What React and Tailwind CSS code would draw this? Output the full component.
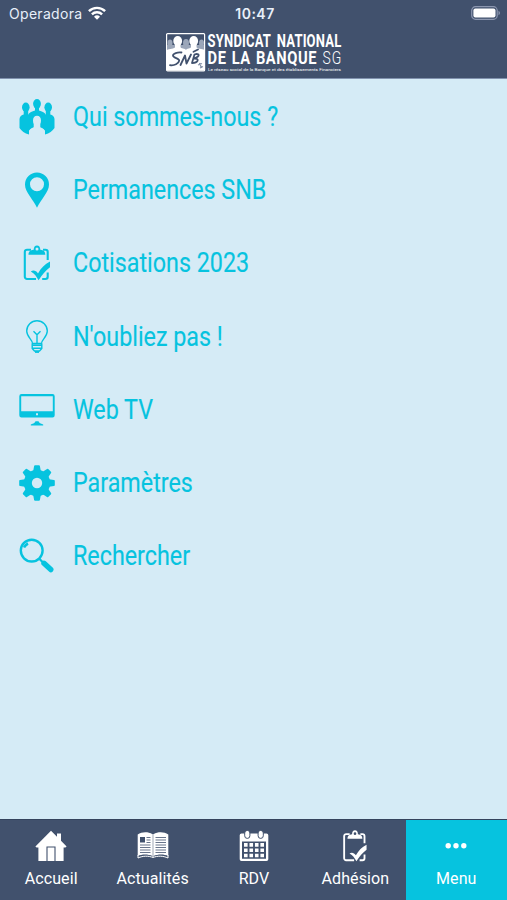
import React from 'react';

const PeopleIcon = () => (
    <svg viewBox="0 0 36 36" className="size-9" fill="currentColor">
        <ellipse cx="18" cy="4.800" rx="3.900" ry="4.800" />
        <path d="M16 7h4v4.500c3 .7 5.500 2 6.500 3.500l1 8H8.500l1-8c1-1.500 3.500-2.800 6.500-3.500z" />
        <ellipse cx="6.800" cy="8.200" rx="3.800" ry="4.700" />
        <ellipse cx="29.200" cy="8.200" rx="3.800" ry="4.700" />
        <path d="M4.700 10h4.500v5.500c2.500.3 4 1.500 5.500 3.200v10c-2 .8-4 1.800-4.700 3.300v3.500C5.700 34.300 2.400 32 .5 29V20c.2-2.500 2-4 4.200-4.500z" />
        <path d="M31.300 10h-4.500v5.500c-2.500.3-4 1.500-5.500 3.200v10c2 .8 4 1.800 4.700 3.300v3.500c4.300-1.200 7.600-3.500 9.500-6.500V20c-.2-2.500-2-4-4.200-4.500z" />
        <path d="M18 16.800c2.500 0 4 1.900 4 4.700 0 2.200-.8 3.700-2 4.600v1.900c2.600.7 4.800 1.800 5.600 3.300l.4 4.700H10l.4-4.700c.8-1.500 3-2.600 5.600-3.300v-1.900c-1.200-.9-2-2.400-2-4.600 0-2.800 1.500-4.700 4-4.700z" className="fill-[#d5ebf6]" />
    </svg>
);

const PinIcon = () => (
    <svg viewBox="0 0 36 36" className="size-9" fill="currentColor">
        <path fillRule="evenodd" d="M18 .5a12 12 0 0 1 12 12c0 4.500-2 7-4.700 11.500-3 4.500-5.300 7.500-7.300 11.700-2-4.200-4.300-7.200-7.300-11.700C8 19.500 6 17 6 12.500a12 12 0 0 1 12-12zm0 4.800a7 7 0 1 0 0 14 7 7 0 0 0 0-14z" />
    </svg>
);

const ClipboardIcon = ({ className }) => (
    <svg viewBox="0 0 36 36" className={className} fill="currentColor">
        <path d="M12 4.700H8a2.200 2.200 0 0 0-2.200 2.200v24.900A2.200 2.200 0 0 0 8 34h9M24 4.700h2.500a2.200 2.200 0 0 1 2.200 2.200V15M28.700 27.500v4.300a2.200 2.200 0 0 1-2.200 2.200h-3.300" fill="none" stroke="currentColor" strokeWidth="2.100" />
        <path fillRule="evenodd" d="M9.500 9.800C9.500 6.500 11 5.200 14.700 4.700 14.700 1.800 16 .4 18 .4s3.300 1.400 3.300 4.300c3.500.5 5 1.800 5 5.100zM18 2.600a1.500 1.500 0 1 0 0 3 1.500 1.500 0 0 0 0-3z" />
        <path d="M11.800 26.500c2.500-1.700 5.200-.9 7.200 1.900 3.200-5.500 6.600-9.200 12-11.900v5.700c-4.800 3.500-7.600 7.300-11.400 13-2-3.500-4-6.800-7.800-8.700z" />
    </svg>
);

const BulbIcon = () => (
    <svg viewBox="0 0 36 36" className="size-9" fill="none" stroke="currentColor" strokeWidth="1.400">
        <path d="M13.500 24.500c0-4-5.800-6.300-5.800-12.400a10.300 10.300 0 0 1 20.600 0c0 6.100-5.800 8.400-5.800 12.400zM13.200 26.300h9.600" strokeLinejoin="round" />
        <path d="M13.200 24.500v5l2.300 2.500h5l2.300-2.500v-5M13.200 29.300h9.600M18 24V15.500M14.500 12.300l3.500 3.500 3.500-3.500" />
        <path d="M16 33h4" strokeWidth="1.800" />
    </svg>
);

const ScreenIcon = () => (
    <svg viewBox="0 0 36 36" className="size-9" fill="currentColor">
        <path fillRule="evenodd" d="M2.500 2h31A2.200 2.200 0 0 1 35.700 4.200v19a2.200 2.200 0 0 1-2.200 2.200h-31A2.200 2.200 0 0 1 .3 23.200v-19A2.200 2.200 0 0 1 2.500 2zM2.200 4.200v15h31.600v-15zM17 21.300v2h2v-2z" />
        <path d="M16.500 29.300h3c.5 1.700 2 2.300 4.700 3.100v1H11.800v-1c2.700-.8 4.200-1.400 4.700-3.100z" />
    </svg>
);

const GearIcon = () => (
    <svg viewBox="-18 -18 36 36" className="size-9" fill="currentColor">
        {[0, 45, 90, 135].map((angle) => (
            <path key={angle} transform={`rotate(${angle})`} d="M-3.800-12L-2.900-17Q-2.700-17.800-1.900-17.800H1.900Q2.700-17.800 2.900-17L3.800-12V12L2.900 17Q2.700 17.800 1.900 17.800H-1.900Q-2.700 17.800-2.900 17L-3.800 12z" />
        ))}
        <circle r="13.200" />
        <circle r="5.200" className="fill-[#d5ebf6]" />
    </svg>
);

const SearchIcon = () => (
    <svg viewBox="0 0 36 36" className="size-9" fill="none" stroke="currentColor">
        <circle cx="12.700" cy="12.600" r="10.900" strokeWidth="2.400" />
        <path d="M5 9.500a9 9 0 0 1 4-4" strokeWidth="2.600" />
        <path d="M19.800 20.300l5 5" strokeWidth="2.200" />
        <path d="M25 25.300l6.800 6.300" strokeWidth="5.400" strokeLinecap="round" />
    </svg>
);

const HomeIcon = () => (
    <svg viewBox="0 0 32 32" className="size-8" fill="currentColor">
        <path d="M16 .7l6 6V3.500h4v7.200l5.600 5.700-1.200 1.200H28.600V31H3.400V17.600H1.600L.4 16.400z" />
        <path d="M12 31V17h8v14" fill="none" stroke="#41516d" strokeWidth="1.100" />
    </svg>
);

const NewsIcon = () => (
    <svg viewBox="0 0 32 32" className="size-8" fill="currentColor">
        <path d="M.7 4.500C5 1.700 11 1.700 15.500 4.200V26C11 24 5 24 .7 26zM16.500 4.200C21 1.700 27 1.700 31.300 4.500V26c-4.300-2-10.300-2-14.800 0z" />
        <path d="M1 25v3c5-2.300 10.500-2.300 15-.5 4.500-1.800 10-1.800 15 .5v-3M16 4v23" fill="none" stroke="currentColor" strokeWidth="1" />
        <path d="M3 7h5v5.500H3z" fill="#41516d" />
        <path d="M9.500 7.500h4M9.500 10h4M9.500 12.500h4M3 15h10.500M3 17.500h10.500M3 20h10.500M3 22.500h10.500M18.500 7.500H29M18.500 10H29M18.500 12.500H29M18.500 15H29M18.500 17.500H29M18.500 20H29M18.500 22.500H29" stroke="#41516d" strokeWidth=".8" />
    </svg>
);

const CalendarIcon = () => (
    <svg viewBox="0 0 32 32" className="size-8" fill="currentColor">
        <path fillRule="evenodd" d="M3.500 3.500h25a1.800 1.800 0 0 1 1.800 1.800v24a1.800 1.800 0 0 1-1.800 1.800h-25a1.800 1.800 0 0 1-1.800-1.800v-24a1.800 1.800 0 0 1 1.800-1.800zM4 11.500v17.300h24V11.500z" />
        <g stroke="#41516d" strokeWidth="1">
            <rect x="6.700" y=".4" width="5.200" height="8" rx="2.600" />
            <rect x="20.100" y=".4" width="5.200" height="8" rx="2.600" />
        </g>
        <path d="M6 14.900h20M6 20.200h20M6 25.500h20" stroke="currentColor" strokeWidth="3.600" strokeDasharray="3.600 1.867" />
    </svg>
);

const DotsIcon = () => (
    <svg viewBox="0 0 32 32" className="size-8" fill="currentColor">
        <circle cx="8.200" cy="15.800" r="2.700" />
        <circle cx="16" cy="15.800" r="2.700" />
        <circle cx="23.800" cy="15.800" r="2.700" />
    </svg>
);

const Logo = () => (
    <svg viewBox="0 0 180 42" className="w-[180px] h-[42px] ml-[4px] overflow-visible" fill="white" fontFamily="Roboto, sans-serif">
        <rect x=".6" y="1.600" width="38" height="37.300" rx="1" fill="#41516d" stroke="white" strokeWidth="1.200" />
        <g fill="#9ba6b9">
            <ellipse cx="4" cy="11" rx="2.500" ry="3.500" />
            <ellipse cx="20" cy="11" rx="3" ry="4" />
            <ellipse cx="35.500" cy="11" rx="2.500" ry="3.500" />
            <path d="M1 13h37v6H1z" />
        </g>
        <ellipse cx="11.700" cy="9" rx="4.400" ry="5" />
        <ellipse cx="27.700" cy="9" rx="4.400" ry="5" />
        <path d="M1 18c2-1.500 8-1 8-3v-3h5.500v3c0 2 5 1 5.500 3 .5-2 5-1 5-3v-3h5.500v3c0 2 6 1.500 8 3v20.500H1z" />
        {/* brushed SNB monogram */}
        <path d="M15.500 20.500c-4-.5-8.500 1-8.500 3 0 2.700 6.500 2.500 6.200 5.200-.3 2.800-5 5.300-9.200 4.500M14.500 33l4.500-9.500 1.500 8 4.500-9M26 31l2.500-8.500c5-1.800 6.500 1.800-1 4 7-.3 4.500 4.500-1.500 4.500M27.500 19.800l4.500-2.300" fill="none" stroke="#41516d" strokeWidth="1.800" strokeLinecap="round" strokeLinejoin="round" />
        <path d="M32 33l4-1.500M34 36l3-1.500M33.500 31l2 5" stroke="#8390a8" strokeWidth="1.200" />
        <g fontSize="18.600" fontWeight="700">
            <text transform="translate(41.600 15.400) scale(.7 1)" textLength="90.500">SYNDICAT</text>
            <text transform="translate(110.800 15.400) scale(.7 1)" textLength="92">NATIONAL</text>
            <text transform="translate(41.600 32.100) scale(.79 1)" textLength="138" wordSpacing="1">DE LA BANQUE</text>
            <text transform="translate(156.600 32.100) scale(.75 1)" textLength="25" fontWeight="300">SG</text>
        </g>
        <text x="42" y="38.700" fontSize="4.200" textLength="133" lengthAdjust="spacingAndGlyphs">Le réseau social de la Banque et des établissements Financiers</text>
    </svg>
);

const menuItems = [
    { label: 'Qui sommes-nous ?', icon: <PeopleIcon /> },
    { label: 'Permanences SNB', icon: <PinIcon /> },
    { label: 'Cotisations 2023', icon: <ClipboardIcon className="size-9" /> },
    { label: "N'oubliez pas !", icon: <BulbIcon /> },
    { label: 'Web TV', icon: <ScreenIcon /> },
    { label: 'Paramètres', icon: <GearIcon /> },
    { label: 'Rechercher', icon: <SearchIcon /> },
];

const tabs = [
    { label: 'Accueil', icon: <HomeIcon /> },
    { label: 'Actualités', icon: <NewsIcon /> },
    { label: 'RDV', icon: <CalendarIcon /> },
    { label: 'Adhésion', icon: <ClipboardIcon className="size-8" /> },
    { label: 'Menu', icon: <DotsIcon />, active: true },
];

const StatusBar = () => (
    <div className="grid grid-cols-3 items-center h-[26px] pl-[9px] pr-[6px] text-[#e8effa] font-['Inter',sans-serif]">
        <div className="flex items-center gap-[6px]">
            <span className="text-[14px] tracking-[0.3px]">Operadora</span>
            <svg viewBox="0 0 18 14" className="w-[18px] h-3.5" fill="none" stroke="white" strokeWidth="2.400">
                <path d="M.9 5.200a11.600 11.600 0 0 1 16.200 0M3.900 8.300a7.300 7.300 0 0 1 10.200 0" />
                <path d="M6 10.700a4.300 4.300 0 0 1 6 0l-3 3z" fill="white" stroke="none" />
            </svg>
        </div>
        <span className="text-center text-[14px] font-semibold tracking-[0.5px]">10:47</span>
        <svg viewBox="0 0 30 14" className="w-[30px] h-3.5 justify-self-end">
            <rect x=".7" y=".7" width="25.500" height="12.600" rx="3.800" fill="none" stroke="#8c97b0" strokeWidth="1.200" />
            <rect x="2.400" y="2.400" width="22.100" height="9.200" rx="2" fill="white" />
            <path d="M27.500 4.800c2 .8 2 3.600 0 4.400z" fill="#8c97b0" />
        </svg>
    </div>
);

const App = () => {
    return (
        <div className="flex flex-col w-full h-screen overflow-hidden bg-[#d5ebf6] font-['Roboto',sans-serif]">
            <header className="h-[79px] shrink-0 bg-[#41516d] border-b border-[#8192ae]">
                <StatusBar />
                <div className="flex justify-center pt-[6px]">
                    <Logo />
                </div>
            </header>

            <ul className="flex-1 pt-[1px] text-[#06c3df]">
                {menuItems.map((item) => (
                    <li key={item.label} className="flex items-center h-[73.3px] pl-[19px] gap-[18px]">
                        {item.icon}
                        <span className="pt-[1px] origin-left scale-x-[0.863] text-[27px] leading-none whitespace-nowrap [-webkit-text-stroke:0.15px]">{item.label}</span>
                    </li>
                ))}
            </ul>

            <nav className="grid grid-cols-5 h-[81px] shrink-0 bg-[#41516d] border-t border-[#35435d] text-white">
                {tabs.map((tab) => (
                    <button
                        key={tab.label}
                        className={`flex flex-col items-center pt-[10px] ${tab.active ? 'bg-[#06c3df]' : 'pl-[1px]'}`}
                    >
                        {tab.icon}
                        <span className="mt-[5px] text-[16px] leading-6 tracking-[0.1px]">{tab.label}</span>
                    </button>
                ))}
            </nav>
        </div>
    );
};

export default App;
